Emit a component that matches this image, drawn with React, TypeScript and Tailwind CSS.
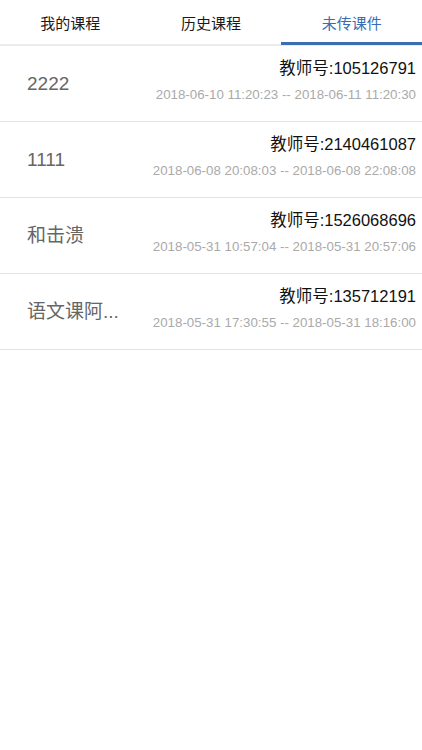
import React from "react";

const rows = [
  { title: "2222", teacher: "教师号:105126791", time: "2018-06-10 11:20:23 -- 2018-06-11 11:20:30" },
  { title: "1111", teacher: "教师号:2140461087", time: "2018-06-08 20:08:03 -- 2018-06-08 22:08:08" },
  { title: "和击溃", teacher: "教师号:1526068696", time: "2018-05-31 10:57:04 -- 2018-05-31 20:57:06" },
  { title: "语文课阿...", teacher: "教师号:135712191", time: "2018-05-31 17:30:55 -- 2018-05-31 18:16:00" },
];

const tabs = ["我的课程", "历史课程", "未传课件"];

export default function App() {
  return (
    <div
      className="w-[422px] h-[750px] bg-white overflow-hidden"
      style={{ fontFamily: '"Liberation Sans", "Noto Sans CJK SC", sans-serif' }}
    >
      <div className="flex h-[46px] border-b-2 border-[#ebebeb]">
        {tabs.map((t, i) => (
          <div
            key={t}
            className={
              i === 2
                ? "relative flex-1 flex items-center justify-center pt-[5px] text-[15px] text-[#3b6cb4]"
                : "relative flex-1 flex items-center justify-center pt-[5px] text-[15px] text-[#1a1a1a]"
            }
          >
            <span>{t}</span>
            {i === 2 && <div className="absolute left-0 right-0 bottom-[-1px] h-[3px] bg-[#3b6cb4]" />}
          </div>
        ))}
      </div>
      {rows.map((r) => (
        <div key={r.teacher} className="flex h-[76px] border-b border-[#e3e3e3] pl-[27px] pr-[6px]">
          <div className="flex-1 self-center text-[19px] text-[#666] leading-[24px] whitespace-nowrap">
            {r.title}
          </div>
          <div className="flex flex-col items-end pt-[10px]">
            <div className="text-[16.5px] leading-[24px] text-[#111]">{r.teacher}</div>
            <div className="mt-[6px] text-[13.3px] leading-[18px] text-[#aaa]">{r.time}</div>
          </div>
        </div>
      ))}
    </div>
  );
}
